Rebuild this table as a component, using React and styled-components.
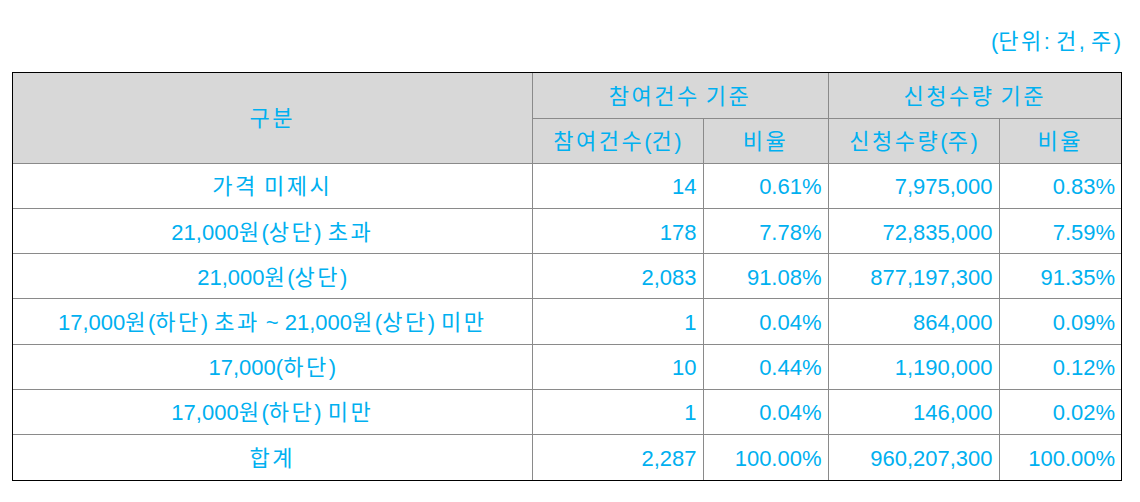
import React from "react";
import styled, { createGlobalStyle } from "styled-components";

const Global = createGlobalStyle`
  html, body { margin: 0; padding: 0; background: #ffffff; }
  body { font-family: "Liberation Sans", "Noto Sans CJK KR", sans-serif; }
`;

const Page = styled.div`
  width: 1140px;
  height: 502px;
  box-sizing: border-box;
  padding: 27px 18px 0 12px;
  display: flex;
  flex-direction: column;
`;

const Unit = styled.div`
  align-self: flex-end;
  color: #00b0f0;
  font-size: 22px;
  line-height: 30px;
  margin-bottom: 15px;
  margin-right: 1px;
`;

const Frame = styled.div`
  width: 1110px;
  box-sizing: border-box;
  border: 1px solid #000000;
`;

const Table = styled.table`
  width: 1108px;
  border-collapse: collapse;
  border-style: hidden;
  table-layout: fixed;
`;

const Col = styled.col`
  width: ${(p) => p.$w}px;
`;

const Cell = styled.td`
  border: 1px solid #8a8a8a;
  height: 45.2px;
  box-sizing: border-box;
  padding: 3px ${(p) => (p.$num ? "6px" : "4px")} 0 4px;
  color: #00b0f0;
  font-size: 22px;
  font-weight: normal;
  line-height: 24px;
  text-align: ${(p) => (p.$num ? "right" : "center")};
  white-space: nowrap;
  background: #ffffff;
`;

const HeadCell = styled(Cell).attrs({ as: "th" })`
  background: #d8d8d8;
`;

const Hangul = styled.span`
  letter-spacing: 2.5px;
`;

const T = ({ children }) => {
  const parts = String(children).split(/([\uAC00-\uD7A3]+)/);
  return (
    <>
      {parts.map((s, i) =>
        /[\uAC00-\uD7A3]/.test(s) ? <Hangul key={i}>{s}</Hangul> : <React.Fragment key={i}>{s}</React.Fragment>
      )}
    </>
  );
};

const widths = [519, 171, 125, 171, 122];

const rows = [
  ["가격 미제시", "14", "0.61%", "7,975,000", "0.83%"],
  ["21,000원(상단) 초과", "178", "7.78%", "72,835,000", "7.59%"],
  ["21,000원(상단)", "2,083", "91.08%", "877,197,300", "91.35%"],
  ["17,000원(하단) 초과 ~ 21,000원(상단) 미만", "1", "0.04%", "864,000", "0.09%"],
  ["17,000(하단)", "10", "0.44%", "1,190,000", "0.12%"],
  ["17,000원(하단) 미만", "1", "0.04%", "146,000", "0.02%"],
  ["합계", "2,287", "100.00%", "960,207,300", "100.00%"],
];

export default function App() {
  return (
    <>
      <Global />
      <Page>
        <Unit>
          <T>(단위: 건, 주)</T>
        </Unit>
        <Frame>
          <Table>
            <colgroup>
              {widths.map((w, i) => (
                <Col key={i} $w={w} />
              ))}
            </colgroup>
            <thead>
              <tr>
                <HeadCell rowSpan={2}>
                  <T>구분</T>
                </HeadCell>
                <HeadCell colSpan={2}>
                  <T>참여건수 기준</T>
                </HeadCell>
                <HeadCell colSpan={2}>
                  <T>신청수량 기준</T>
                </HeadCell>
              </tr>
              <tr>
                <HeadCell>
                  <T>참여건수(건)</T>
                </HeadCell>
                <HeadCell>
                  <T>비율</T>
                </HeadCell>
                <HeadCell>
                  <T>신청수량(주)</T>
                </HeadCell>
                <HeadCell>
                  <T>비율</T>
                </HeadCell>
              </tr>
            </thead>
            <tbody>
              {rows.map((r, i) => (
                <tr key={i}>
                  <Cell>
                    <T>{r[0]}</T>
                  </Cell>
                  {r.slice(1).map((v, j) => (
                    <Cell key={j} $num>
                      {v}
                    </Cell>
                  ))}
                </tr>
              ))}
            </tbody>
          </Table>
        </Frame>
      </Page>
    </>
  );
}
